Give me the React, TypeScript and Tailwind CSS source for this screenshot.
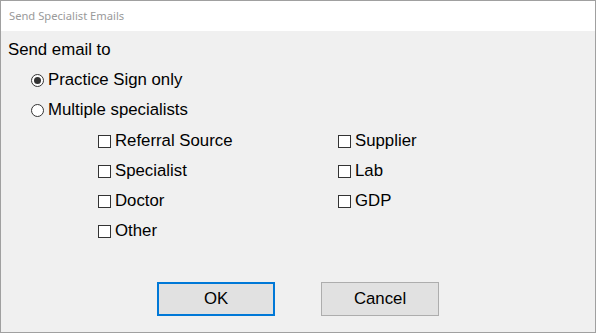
function Radio({ checked, label }: { checked?: boolean; label: string }) {
  return (
    <div className="flex h-[30px] items-center">
      <span className="ml-[30px] flex h-[13px] w-[13px] items-center justify-center rounded-full border border-[#333333] bg-white">
        {checked && <span className="h-[7px] w-[7px] rounded-full bg-[#333333]" />}
      </span>
      <span className="ml-[4px]">{label}</span>
    </div>
  );
}

function Check({ label }: { label: string }) {
  return (
    <div className="flex h-[30px] items-center">
      <span className="h-[13px] w-[13px] border border-[#333333] bg-white" />
      <span className="ml-[4px]">{label}</span>
    </div>
  );
}

export default function App() {
  return (
    <div className="flex h-[333px] w-[596px] flex-col border border-[#a0a0a0] bg-[#f0f0f0] font-['Liberation_Sans',Arial,sans-serif] text-[16.8px] text-black">
      <div className="flex h-[30px] shrink-0 items-center bg-white pl-[8px] font-['Noto_Sans',sans-serif] text-[11.2px] text-[#9a9a9a]">
        Send Specialist Emails
      </div>
      <div className="flex flex-1 flex-col pt-[4px]">
        <div className="flex h-[30px] items-center pl-[7px]">Send email to</div>
        <Radio checked label="Practice Sign only" />
        <Radio label="Multiple specialists" />
        <div className="mt-[1px] flex pl-[97px]">
          <div className="flex w-[240px] flex-col">
            <Check label="Referral Source" />
            <Check label="Specialist" />
            <Check label="Doctor" />
            <Check label="Other" />
          </div>
          <div className="flex flex-col">
            <Check label="Supplier" />
            <Check label="Lab" />
            <Check label="GDP" />
          </div>
        </div>
        <div className="mt-[36px] flex justify-center gap-[46px]">
          <button className="h-[34px] w-[118px] border-2 border-[#0078d7] bg-[#e1e1e1]">OK</button>
          <button className="h-[34px] w-[118px] border border-[#adadad] bg-[#e1e1e1]">Cancel</button>
        </div>
      </div>
    </div>
  );
}
